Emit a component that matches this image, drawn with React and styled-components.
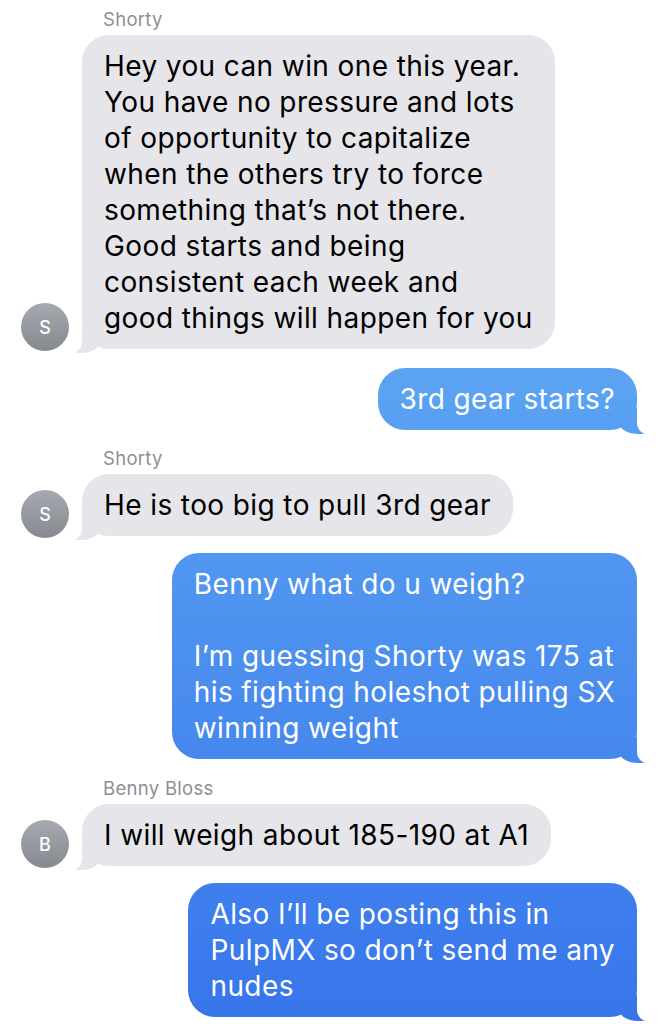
import React from 'react';
import styled, { createGlobalStyle, css } from 'styled-components';

const GlobalStyle = createGlobalStyle`
  html, body {
    margin: 0;
    padding: 0;
    background: #ffffff;
  }
  body {
    font-family: "Inter", "Liberation Sans", sans-serif;
    -webkit-font-smoothing: antialiased;
  }
`

const Thread = styled.div`
  width: 666px;
  height: 1024px;
  overflow: hidden;
  box-sizing: border-box;
  padding-top: 8px;
  display: flex;
  flex-direction: column;
`

const Group = styled.div`
  display: flex;
  flex-direction: column;
  margin-top: ${p => p.gap || 0}px;
`

const Name = styled.div`
  padding-left: 103px;
  font-size: 18.5px;
  line-height: 22px;
  letter-spacing: 0.3px;
  color: #8e8e93;
  margin-bottom: 5px;
`

const Row = styled.div`
  display: flex;
  align-items: flex-end;
  justify-content: ${p => (p.me ? 'flex-end' : 'flex-start')};
  padding-right: ${p => (p.me ? '29px' : '0')};
  margin-top: ${p => p.gap || 0}px;
`

const Avatar = styled.div`
  position: relative;
  z-index: 2;
  width: 48px;
  height: 48px;
  border-radius: 50%;
  margin-left: 21px;
  margin-right: 13px;
  margin-bottom: -2px;
  flex-shrink: 0;
  background: linear-gradient(to bottom, #a6a9af, #868990);
  color: #ffffff;
  font-size: 18px;
  font-weight: 500;
  display: flex;
  align-items: center;
  justify-content: center;
`

const sentBg = css`
  background-image: linear-gradient(to bottom, #70bef6 0px, #3775eb 1024px);
  background-attachment: fixed;
`

const Bubble = styled.div`
  position: relative;
  z-index: 1;
  box-sizing: border-box;
  padding: 13px 22px;
  border-radius: 27px;
  font-size: 28px;
  line-height: 36px;
  letter-spacing: 0.4px;
  color: ${p => (p.me ? '#ffffff' : '#000000')};
  background-color: ${p => (p.me ? '#4a8ff0' : '#e5e5ea')};
  ${p => p.me && sentBg}

  /* tail body */
  &::before {
    content: "";
    position: absolute;
    bottom: -4px;
    width: 26px;
    height: 26px;
    ${p => p.me ? css`
      right: -9px;
      border-bottom-left-radius: 18px 10px;
      ${sentBg}
    ` : css`
      left: -9px;
      border-bottom-right-radius: 18px 10px;
      background-color: #e5e5ea;
    `}
  }

  /* tail cut-out */
  &::after {
    content: "";
    position: absolute;
    bottom: -5px;
    width: 25px;
    height: 28px;
    background: #ffffff;
    ${p => p.me ? css`
      right: -25px;
      border-bottom-left-radius: 13px 12px;
    ` : css`
      left: -25px;
      border-bottom-right-radius: 13px 12px;
    `}
  }
`

const Line = styled.span`
  position: relative;
  z-index: 1;
  display: block;
  white-space: nowrap;
  min-height: 36px;
`

const messages = [
  {
    from: 'Shorty',
    initial: 'S',
    gap: 0,
    lines: [
      'Hey you can win one this year.',
      'You have no pressure and lots',
      'of opportunity to capitalize',
      'when the others try to force',
      'something that\u2019s not there.',
      'Good starts and being',
      'consistent each week and',
      'good things will happen for you',
    ],
  },
  { me: true, gap: 19, lines: ['3rd gear starts?'] },
  { from: 'Shorty', initial: 'S', gap: 17, lines: ['He is too big to pull 3rd gear'] },
  {
    me: true,
    gap: 17,
    lines: [
      'Benny what do u weigh?',
      '',
      'I\u2019m guessing Shorty was 175 at',
      'his fighting holeshot pulling SX',
      'winning weight',
    ],
  },
  { from: 'Benny Bloss', initial: 'B', gap: 18, lines: ['I will weigh about 185-190 at A1'] },
  {
    me: true,
    gap: 17,
    lines: [
      'Also I\u2019ll be posting this in',
      'PulpMX so don\u2019t send me any',
      'nudes',
    ],
  },
]

const renderLines = lines => lines.map((l, i) => <Line key={i}>{l}</Line>)

export default function App() {
  return (
    <>
      <GlobalStyle />
      <Thread>
        {messages.map((m, i) =>
          m.me ? (
            <Row key={i} me gap={m.gap}>
              <Bubble me>{renderLines(m.lines)}</Bubble>
            </Row>
          ) : (
            <Group key={i} gap={m.gap}>
              <Name>{m.from}</Name>
              <Row>
                <Avatar>{m.initial}</Avatar>
                <Bubble>{renderLines(m.lines)}</Bubble>
              </Row>
            </Group>
          )
        )}
      </Thread>
    </>
  )
}
